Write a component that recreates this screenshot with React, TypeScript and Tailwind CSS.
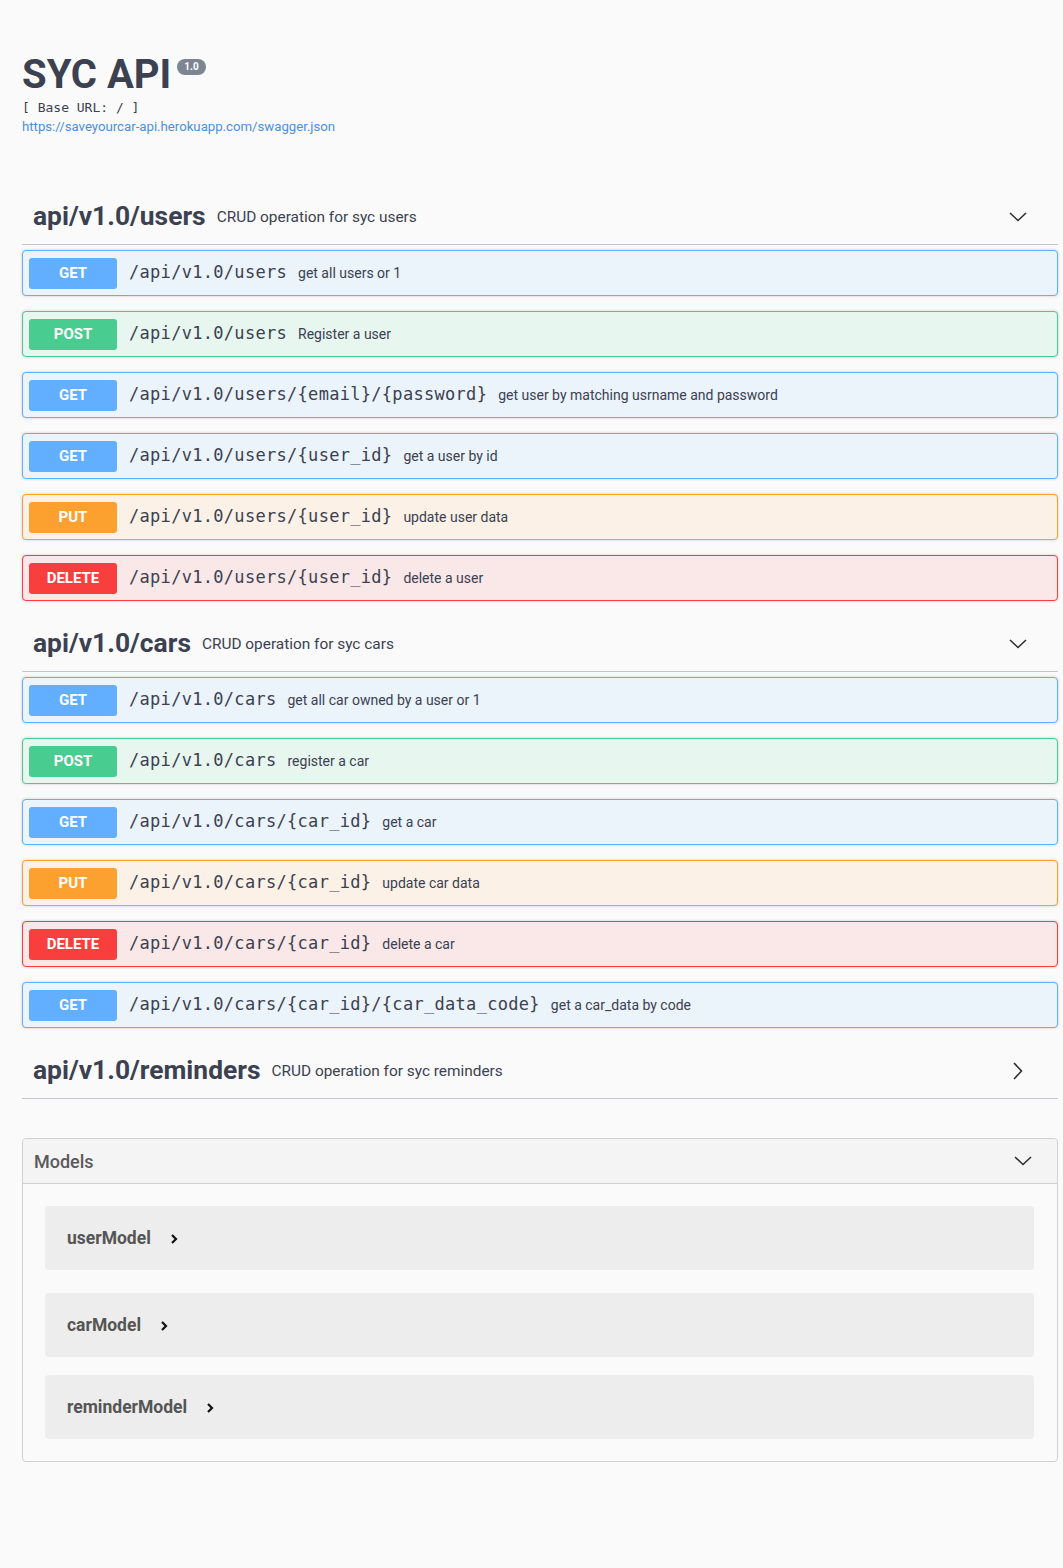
import React from "react";

type Op = { method: "GET" | "POST" | "PUT" | "DELETE"; path: string; desc: string };

const methodStyle: Record<Op["method"], { box: string; badge: string }> = {
  GET: { box: "border-[#61affe] bg-[#ebf3fb]", badge: "bg-[#61affe]" },
  POST: { box: "border-[#49cc90] bg-[#e8f6f0]", badge: "bg-[#49cc90]" },
  PUT: { box: "border-[#fca130] bg-[#fbf1e6]", badge: "bg-[#fca130]" },
  DELETE: { box: "border-[#f93e3e] bg-[#fae7e7]", badge: "bg-[#f93e3e]" },
};

const sections: { name: string; desc: string; open: boolean; ops: Op[] }[] = [
  {
    name: "api/v1.0/users",
    desc: "CRUD operation for syc users",
    open: true,
    ops: [
      { method: "GET", path: "/api/v1.0/users", desc: "get all users or 1" },
      { method: "POST", path: "/api/v1.0/users", desc: "Register a user" },
      { method: "GET", path: "/api/v1.0/users/{email}/{password}", desc: "get user by matching usrname and password" },
      { method: "GET", path: "/api/v1.0/users/{user_id}", desc: "get a user by id" },
      { method: "PUT", path: "/api/v1.0/users/{user_id}", desc: "update user data" },
      { method: "DELETE", path: "/api/v1.0/users/{user_id}", desc: "delete a user" },
    ],
  },
  {
    name: "api/v1.0/cars",
    desc: "CRUD operation for syc cars",
    open: true,
    ops: [
      { method: "GET", path: "/api/v1.0/cars", desc: "get all car owned by a user or 1" },
      { method: "POST", path: "/api/v1.0/cars", desc: "register a car" },
      { method: "GET", path: "/api/v1.0/cars/{car_id}", desc: "get a car" },
      { method: "PUT", path: "/api/v1.0/cars/{car_id}", desc: "update car data" },
      { method: "DELETE", path: "/api/v1.0/cars/{car_id}", desc: "delete a car" },
      { method: "GET", path: "/api/v1.0/cars/{car_id}/{car_data_code}", desc: "get a car_data by code" },
    ],
  },
  { name: "api/v1.0/reminders", desc: "CRUD operation for syc reminders", open: false, ops: [] },
];

const models = [
  { name: "userModel", mb: "mb-[23px]" },
  { name: "carModel", mb: "mb-[18px]" },
  { name: "reminderModel", mb: "mb-[22px]" },
];

function ChevronDown() {
  return (
    <svg width="20" height="20" viewBox="0 0 20 20" fill="none">
      <polyline points="2,6 10,13.5 18,6" stroke="#303030" strokeWidth="1.6" />
    </svg>
  );
}

function ChevronRight() {
  return (
    <svg width="20" height="20" viewBox="0 0 20 20" fill="none">
      <polyline points="6,2 13.5,10 6,18" stroke="#303030" strokeWidth="1.6" />
    </svg>
  );
}

function SmallArrow() {
  return (
    <svg width="10" height="12" viewBox="0 0 10 12" fill="none">
      <polyline points="3,2 7,6 3,10" stroke="#111" strokeWidth="2.2" />
    </svg>
  );
}

function OpRow({ op }: { op: Op }) {
  const s = methodStyle[op.method];
  return (
    <div className={`mb-[15px] flex h-[46px] items-center rounded-[4px] border px-[6px] shadow-[0_0_3px_rgba(0,0,0,0.19)] ${s.box}`}>
      <div className={`flex h-[31px] w-[88px] items-center justify-center rounded-[3px] text-[15px] font-bold text-white ${s.badge}`}>
        {op.method}
      </div>
      <span className="ml-[12px] font-['DejaVu_Sans_Mono',monospace] text-[17px] tracking-[0.3px] text-[#3b4151]">
        {op.path}
      </span>
      <span className="ml-[11px] text-[14px] text-[#3b4151]">{op.desc}</span>
    </div>
  );
}

export default function App() {
  return (
    <div className="min-h-[1568px] bg-[#fafafa] pl-[22px] pr-[5px] font-['Roboto',sans-serif] text-[#3b4151]">
      {/* info */}
      <div className="pt-[52px]">
        <div className="flex items-start">
          <h1 className="text-[40px] font-bold leading-[46px] text-[#3b4151]">SYC API</h1>
          <span className="ml-[6px] mt-[7px] rounded-[8px] bg-[#7d8492] px-[7px] py-[1px] text-[10px] font-bold leading-[14px] text-white">
            1.0
          </span>
        </div>
        <div className="mt-[1px] font-['DejaVu_Sans_Mono',monospace] text-[13px] leading-[18px] text-[#3b4151]">
          [ Base URL: / ]
        </div>
        <a className="block text-[13.2px] leading-[20px] text-[#4990e2]">
          https://saveyourcar-api.herokuapp.com/swagger.json
        </a>
      </div>

      {/* tags */}
      <div className="mt-[52px]">
        {sections.map((sec) => (
          <div key={sec.name}>
            <div className="mb-[5px] flex h-[56px] items-center border-b border-[#c4c6cb] pl-[11px] pr-[30px]">
              <span className="text-[26.4px] font-bold text-[#3b4151]">{sec.name}</span>
              <span className="ml-[11px] mt-[2px] text-[15.4px] text-[#3b4151]">{sec.desc}</span>
              <span className="ml-auto">{sec.open ? <ChevronDown /> : <ChevronRight />}</span>
            </div>
            {sec.ops.map((op, i) => (
              <OpRow key={i} op={op} />
            ))}
          </div>
        ))}
      </div>

      {/* models */}
      <div className="mt-[39px] rounded-[4px] border border-[#cfd1d5]">
        <div className="flex h-[45px] items-center rounded-t-[4px] border-b border-[#cfd1d5] bg-[#f4f4f4] pl-[11px] pr-[24px]">
          <span className="text-[18px] font-medium text-[#5a5a5a]">Models</span>
          <span className="ml-auto">
            <ChevronDown />
          </span>
        </div>
        <div className="px-[22px] pt-[22px] pr-[23px]">
          {models.map((m) => (
            <div key={m.name} className={`flex h-[64px] items-center rounded-[4px] bg-[#ededed] pl-[22px] ${m.mb}`}>
              <span className="text-[17.5px] font-bold text-[#555]">{m.name}</span>
              <span className="ml-[18px] mt-[2px]">
                <SmallArrow />
              </span>
            </div>
          ))}
        </div>
      </div>
    </div>
  );
}
